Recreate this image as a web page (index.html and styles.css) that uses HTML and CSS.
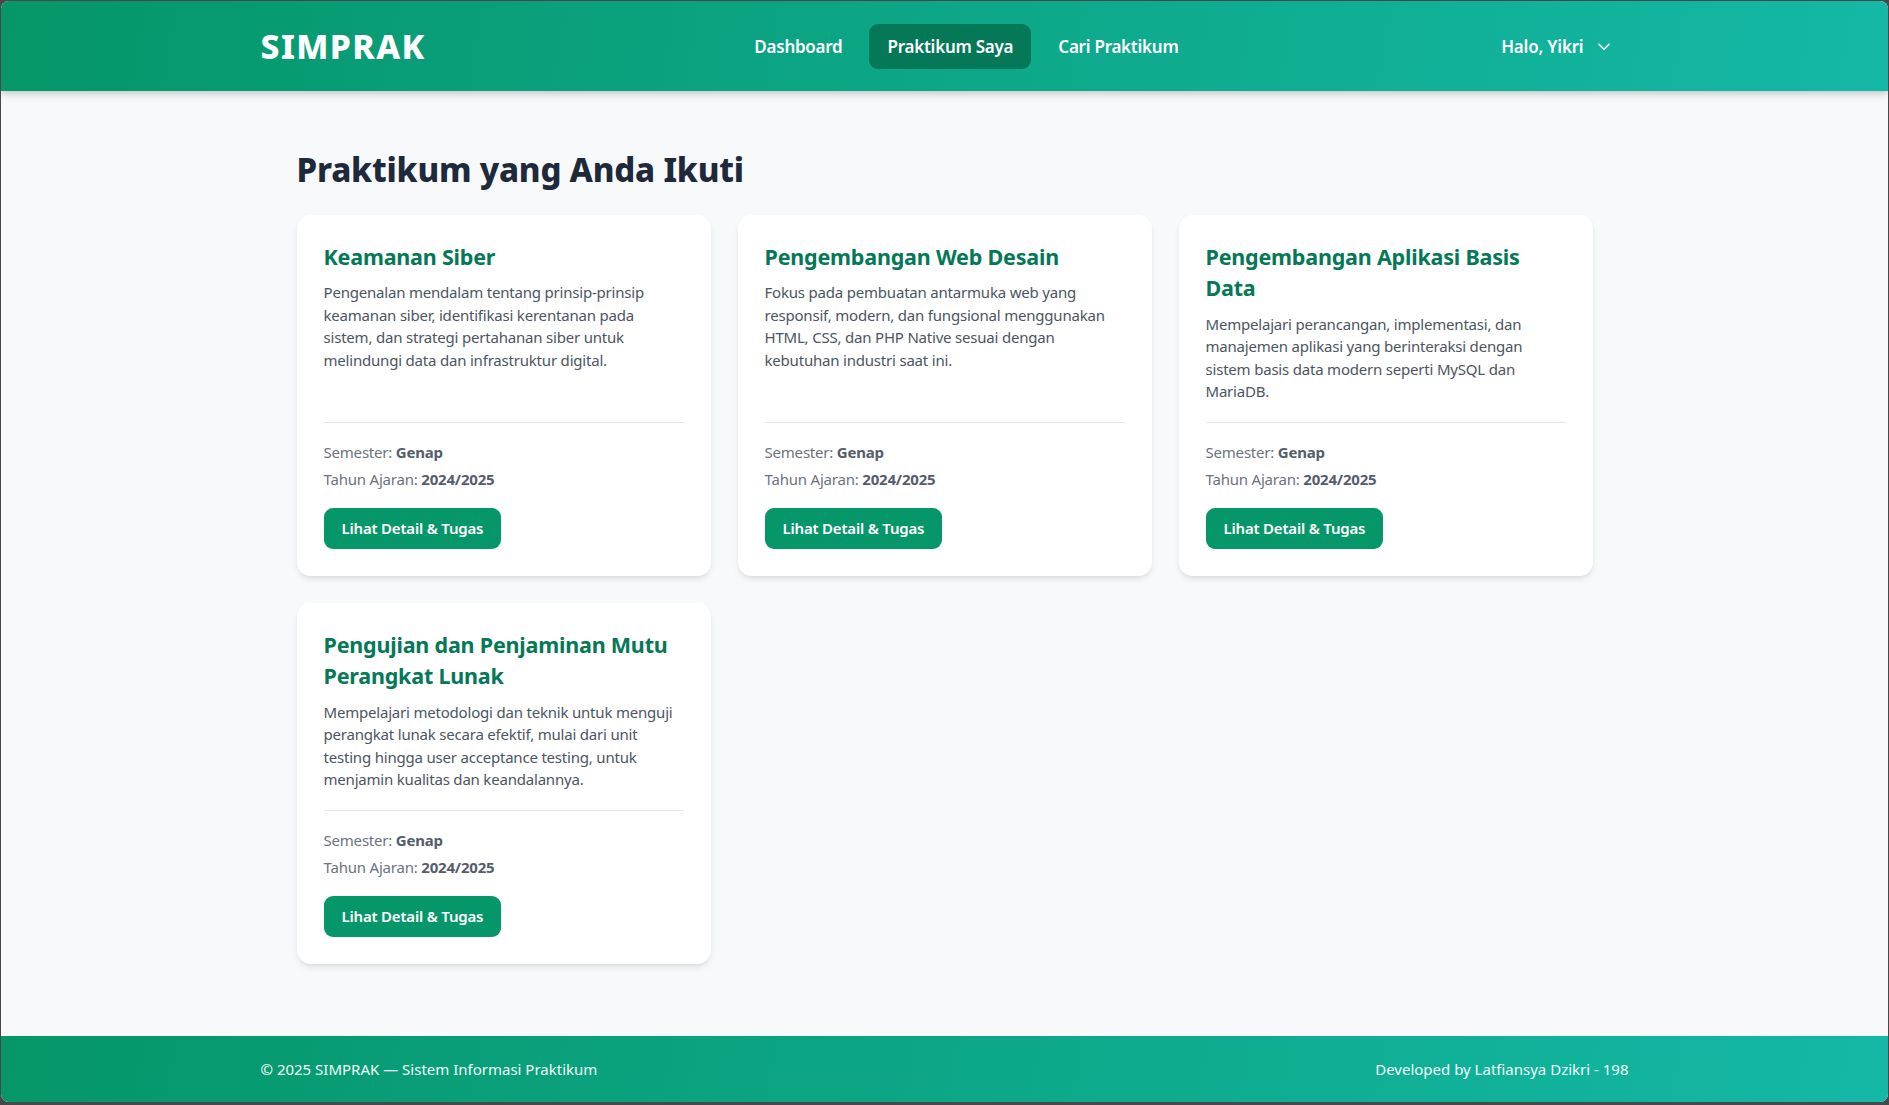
FILE: index.html
```html
<!DOCTYPE html>
<html lang="id">
<head>
<meta charset="utf-8">
<title>SIMPRAK - Praktikum Saya</title>
<link rel="stylesheet" href="styles.css">
</head>
<body>
<div class="window">
  <header class="topbar">
    <div class="topbar-inner">
      <div class="logo">SIMPRAK</div>
      <nav class="nav">
        <a class="nav-link" href="#">Dashboard</a>
        <a class="nav-link active" href="#">Praktikum Saya</a>
        <a class="nav-link" href="#">Cari Praktikum</a>
      </nav>
      <div class="user">
        <span>Halo, Yikri</span>
        <svg class="chev" width="12" height="8" viewBox="0 0 12 8"><polyline points="1,1.2 6,6.2 11,1.2" fill="none" stroke="#ffffff" stroke-width="1.6" stroke-linecap="round" stroke-linejoin="round"/></svg>
      </div>
    </div>
  </header>

  <main class="main">
    <div class="content">
      <h1 class="page-title">Praktikum yang Anda Ikuti</h1>
      <div class="grid">
        <div class="card">
          <h2 class="card-title">Keamanan Siber</h2>
          <p class="card-desc">Pengenalan mendalam tentang prinsip-prinsip keamanan siber, identifikasi kerentanan pada sistem, dan strategi pertahanan siber untuk melindungi data dan infrastruktur digital.</p>
          <div class="meta">
            <div>Semester: <b>Genap</b></div>
            <div>Tahun Ajaran: <b>2024/2025</b></div>
          </div>
          <a class="btn" href="#">Lihat Detail &amp; Tugas</a>
        </div>
        <div class="card">
          <h2 class="card-title">Pengembangan Web Desain</h2>
          <p class="card-desc">Fokus pada pembuatan antarmuka web yang responsif, modern, dan fungsional menggunakan HTML, CSS, dan PHP Native sesuai dengan kebutuhan industri saat ini.</p>
          <div class="meta">
            <div>Semester: <b>Genap</b></div>
            <div>Tahun Ajaran: <b>2024/2025</b></div>
          </div>
          <a class="btn" href="#">Lihat Detail &amp; Tugas</a>
        </div>
        <div class="card">
          <h2 class="card-title">Pengembangan Aplikasi Basis Data</h2>
          <p class="card-desc">Mempelajari perancangan, implementasi, dan manajemen aplikasi yang berinteraksi dengan sistem basis data modern seperti MySQL dan MariaDB.</p>
          <div class="meta">
            <div>Semester: <b>Genap</b></div>
            <div>Tahun Ajaran: <b>2024/2025</b></div>
          </div>
          <a class="btn" href="#">Lihat Detail &amp; Tugas</a>
        </div>
        <div class="card">
          <h2 class="card-title">Pengujian dan Penjaminan Mutu Perangkat Lunak</h2>
          <p class="card-desc">Mempelajari metodologi dan teknik untuk menguji perangkat lunak secara efektif, mulai dari unit testing hingga user acceptance testing, untuk menjamin kualitas dan keandalannya.</p>
          <div class="meta">
            <div>Semester: <b>Genap</b></div>
            <div>Tahun Ajaran: <b>2024/2025</b></div>
          </div>
          <a class="btn" href="#">Lihat Detail &amp; Tugas</a>
        </div>
      </div>
    </div>
  </main>

  <footer class="footer">
    <div class="footer-inner">
      <span>© 2025 SIMPRAK — Sistem Informasi Praktikum</span>
      <span>Developed by Latfiansya Dzikri - 198</span>
    </div>
  </footer>
</div>
</body>
</html>
```
FILE: styles.css
```css
* { box-sizing: border-box; }

html, body {
  margin: 0;
  padding: 0;
  height: 100%;
}

body {
  background: #46484b;
  font-family: "Noto Sans", "Open Sans", sans-serif;
  overflow: hidden;
}

.window {
  margin: 1px 1px 3px 1px;
  height: calc(100vh - 4px);
  border-radius: 8px;
  overflow: hidden;
  background: #f8f9fa;
  display: flex;
  flex-direction: column;
}

.topbar {
  position: relative;
  z-index: 2;
  height: 90px;
  flex: 0 0 90px;
  background: linear-gradient(100deg, #059669 0%, #14b8a6 100%);
  box-shadow: 0 4px 8px rgba(0, 0, 0, 0.13), 0 2px 4px rgba(0, 0, 0, 0.08);
}

.topbar-inner {
  max-width: 1440px;
  height: 100%;
  margin: 0 auto;
  padding: 0 36px;
  display: flex;
  align-items: center;
  justify-content: space-between;
}

.logo {
  color: #ffffff;
  font-size: 33.75px;
  font-weight: 800;
  letter-spacing: 1.4px;
  line-height: 40px;
}

.nav {
  display: flex;
  gap: 9px;
  margin-left: 24px;
}

.nav-link {
  color: #ffffff;
  text-decoration: none;
  font-size: 17px;
  font-weight: 600;
  line-height: 23px;
  padding: 11px 18px;
  border-radius: 9px;
  letter-spacing: -0.25px;
}

.nav-link.active {
  background: #047857;
}

.user {
  display: flex;
  align-items: center;
  gap: 15px;
  padding: 0 18px;
  color: #ffffff;
  font-size: 17px;
  font-weight: 600;
  letter-spacing: -0.2px;
}

.chev { display: block; margin-top: 1px; }

.main {
  flex: 1;
  padding: 59px 0 40px;
}

.content {
  max-width: 1296px;
  margin: 0 auto;
}

.page-title {
  margin: 0 0 24px;
  font-size: 33px;
  line-height: 40.5px;
  font-weight: 800;
  color: #1e293b;
  letter-spacing: -0.2px;
}

.grid {
  display: grid;
  grid-template-columns: repeat(3, 1fr);
  gap: 27px;
}

.card {
  background: #ffffff;
  border-radius: 13.5px;
  padding: 26px 27px 27px;
  display: flex;
  flex-direction: column;
  align-items: flex-start;
  box-shadow: 0 4px 7px -1px rgba(0, 0, 0, 0.09), 0 2px 4px -2px rgba(0, 0, 0, 0.08);
}

.card-title {
  margin: 0;
  font-size: 21.5px;
  line-height: 31.5px;
  font-weight: 700;
  color: #047857;
  letter-spacing: -0.2px;
}

.card-desc {
  margin: 9px 0 0;
  flex: 1;
  font-size: 15px;
  line-height: 22.5px;
  color: #4b5563;
  letter-spacing: -0.2px;
}

.meta {
  align-self: stretch;
  margin-top: 19px;
  padding-top: 18px;
  border-top: 1px solid #e5e7eb;
  display: flex;
  flex-direction: column;
  gap: 4.5px;
  font-size: 15px;
  line-height: 22.5px;
  color: #6b7280;
  letter-spacing: -0.2px;
}

.meta b {
  font-weight: 700;
  color: #555d6b;
}

.btn {
  margin-top: 18px;
  background: #059669;
  color: #ffffff;
  text-decoration: none;
  font-size: 15px;
  font-weight: 600;
  line-height: 22.5px;
  padding: 9px 18px;
  border-radius: 9px;
  letter-spacing: -0.2px;
}

.footer {
  flex: 0 0 66px;
  background: linear-gradient(100deg, #059669 0%, #14b8a6 100%);
}

.footer-inner {
  max-width: 1440px;
  height: 100%;
  margin: 0 auto;
  padding: 0 36px;
  display: flex;
  align-items: center;
  justify-content: space-between;
  color: #f0fdf8;
  font-size: 15px;
  letter-spacing: 0;
}
```
